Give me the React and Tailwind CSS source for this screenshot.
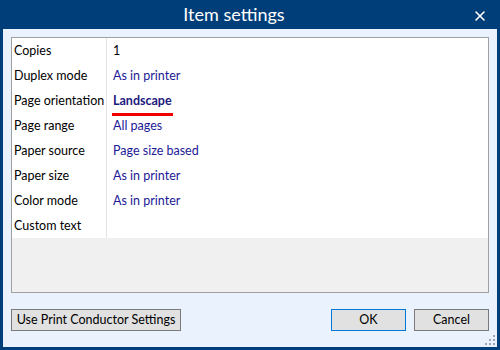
import { X } from "lucide-react";

const rows = [
  { label: "Copies", value: "1", plain: true },
  { label: "Duplex mode", value: "As in printer" },
  { label: "Page orientation", value: "Landscape", bold: true },
  { label: "Page range", value: "All pages" },
  { label: "Paper source", value: "Page size based" },
  { label: "Paper size", value: "As in printer" },
  { label: "Color mode", value: "As in printer" },
  { label: "Custom text", value: "" },
];

function Grip() {
  const dots = [
    [8, 0],
    [4, 4], [8, 4],
    [0, 8], [4, 8], [8, 8],
  ];
  return (
    <svg width="11" height="11" className="absolute right-[1px] bottom-[1px]">
      {dots.map(([x, y], i) => (
        <rect key={i} x={x} y={y} width="2" height="2" fill="#9aa6b4" />
      ))}
    </svg>
  );
}

export default function App() {
  return (
    <div
      className="w-[500px] h-[350px] bg-[#003e79] flex flex-col text-[12.5px] text-black"
      style={{ fontFamily: 'Lato, "Open Sans", sans-serif' }}
    >
      {/* TITLE BAR */}
      <div className="h-[29px] relative flex items-center justify-center text-white">
        <span className="text-[18px] leading-none mr-[32px] mt-[-1px]">Item settings</span>
        <X className="absolute right-[12px] top-[8px] w-[16px] h-[16px]" strokeWidth={2.4} />
      </div>

      {/* BODY */}
      <div className="flex-1 mx-[3px] mb-[3px] bg-[#e9f2fd] px-[8px] pt-[8px] flex flex-col relative">
        <div className="h-[256px] border border-[#a0a0a0] bg-[#f0f0f0] flex flex-col">
          <div className="bg-white">
            {rows.map((r) => (
              <div key={r.label} className="h-[25px] flex items-stretch whitespace-nowrap">
                <div className="w-[95px] pl-[2px] pt-[2px] flex items-center border-r border-[#e3e3e3]">
                  {r.label}
                </div>
                <div className="pl-[6px] pt-[2px] flex items-center">
                  {r.bold ? (
                    <span className="relative font-bold text-[#1c1a7d]">
                      {r.value}
                      <span className="absolute left-[-1px] right-[-1px] bottom-[-5px] h-[3px] bg-[#f00000]" />
                    </span>
                  ) : (
                    <span className={r.plain ? "text-black" : "text-[#1c1a96]"}>{r.value}</span>
                  )}
                </div>
              </div>
            ))}
          </div>
        </div>

        {/* BUTTONS */}
        <div className="flex items-center mt-[16px]">
          <button className="w-[170px] h-[22px] pt-[1px] bg-[#e1e1e1] border border-[#7a7a7a]">
            Use Print Conductor Settings
          </button>
          <div className="ml-auto flex gap-[8px]">
            <button className="w-[75px] h-[22px] pt-[1px] bg-[#e1e1e1] border border-[#0078d7]">OK</button>
            <button className="w-[75px] h-[22px] pt-[1px] bg-[#e1e1e1] border border-[#7a7a7a]">Cancel</button>
          </div>
        </div>
        <Grip />
      </div>
    </div>
  );
}
